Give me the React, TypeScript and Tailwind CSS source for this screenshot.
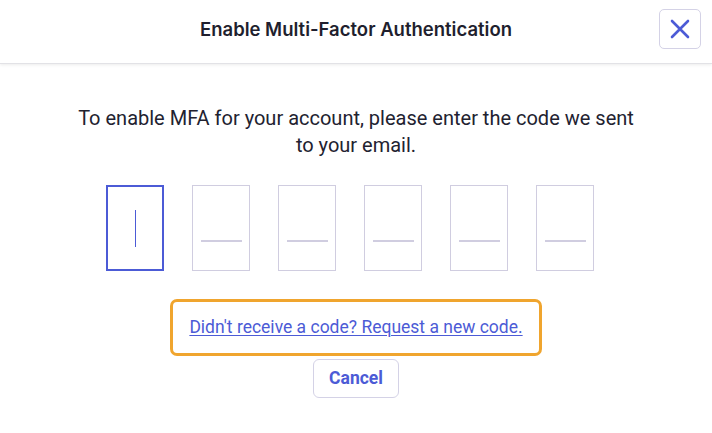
import React from "react";

export default function App() {
  const boxes = [0, 1, 2, 3, 4, 5];
  return (
    <div className="w-[712px] h-[433px] bg-white overflow-hidden" style={{ fontFamily: "Roboto, 'Liberation Sans', sans-serif" }}>
      <div className="relative h-[64px] border-b border-[#e2e2e6] shadow-[0_1px_3px_rgba(0,0,0,0.08)] flex items-center justify-center">
        <h1 className="text-[18.5px] font-semibold text-[#1f1f2e] -mt-[4px]" style={{ fontFamily: "Inter, Roboto, sans-serif" }}>
          Enable Multi-Factor Authentication
        </h1>
        <button className="absolute left-[659px] top-[9px] w-[42px] h-[40px] rounded-[5px] border border-[#d4d2e6] flex items-center justify-center bg-white">
          <svg width="22" height="22" viewBox="0 0 22 22" fill="none" stroke="#4c5bd6" strokeWidth="2.6" strokeLinecap="round">
            <path d="M3 3 L19 19 M19 3 L3 19" />
          </svg>
        </button>
      </div>
      <div className="flex flex-col items-center">
        <p className="mt-[41px] w-[562px] text-center text-[20px] leading-[27px] text-[#222230]">
          To enable MFA for your account, please enter the code we sent to your email.
        </p>
        <div className="mt-[26px] flex gap-[28px] pr-[12px]">
          {boxes.map((i) =>
            i === 0 ? (
              <div key={i} className="w-[58px] h-[86px] border-2 border-[#4c5bd6] flex items-center justify-center">
                <div className="w-px h-[37px] bg-[#4c5bd6]" />
              </div>
            ) : (
              <div key={i} className="w-[58px] h-[86px] border border-[#d0cde0] flex flex-col items-center">
                <div className="mt-[54px] w-[41px] h-[2px] bg-[#d0cde0]" />
              </div>
            )
          )}
        </div>
        <div className="mt-[28px] w-[372px] h-[57px] rounded-[7px] border-[3px] border-[#f0a52e] flex items-center justify-center">
          <a href="#" className="text-[17.5px] text-[#4c5bd6] underline underline-offset-2 decoration-1">
            Didn't receive a code? Request a new code.
          </a>
        </div>
        <button className="mt-[3px] w-[86px] h-[39px] rounded-[6px] border border-[#d4d2e6] text-[17.5px] font-bold text-[#4c5bd6] bg-white">
          Cancel
        </button>
      </div>
    </div>
  );
}
